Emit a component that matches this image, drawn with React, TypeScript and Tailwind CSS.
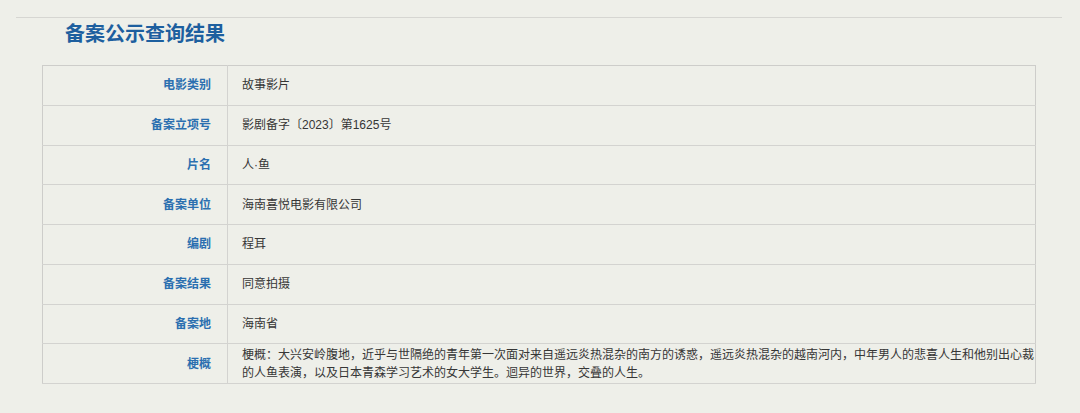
import React from 'react';

const rows: { label: string; value: string }[] = [
  { label: '电影类别', value: '故事影片' },
  { label: '备案立项号', value: '影剧备字〔2023〕第1625号' },
  { label: '片名', value: '人·鱼' },
  { label: '备案单位', value: '海南喜悦电影有限公司' },
  { label: '编剧', value: '程耳' },
  { label: '备案结果', value: '同意拍摄' },
  { label: '备案地', value: '海南省' },
  {
    label: '梗概',
    value:
      '梗概：大兴安岭腹地，近乎与世隔绝的青年第一次面对来自遥远炎热混杂的南方的诱惑，遥远炎热混杂的越南河内，中年男人的悲喜人生和他别出心裁的人鱼表演，以及日本青森学习艺术的女大学生。迴异的世界，交叠的人生。',
  },
];

export default function App() {
  return (
    <div
      className="h-[413px] w-[1080px] overflow-hidden bg-[#eeefe9] pt-[17px]"
      style={{ fontFamily: '"Liberation Sans", "Noto Sans CJK SC", sans-serif' }}
    >
      <div className="ml-[16px] w-[1046px] border-t border-[#d6d6d2]" />
      <h1 className="ml-[65px] mt-[3px] h-[44px] text-[20px] font-bold leading-[26px] text-[#1d5f9f]">
        备案公示查询结果
      </h1>
      <table className="ml-[42px] w-[994px] border-collapse border border-[#cdcdca] text-[12px]">
        <tbody>
          {rows.map((row) => (
            <tr key={row.label} className="h-[39.75px] border-b border-[#d3d3d0]">
              <td className="w-[185px] border-r border-[#d3d3d0] pr-[16px] text-right align-middle font-bold text-[#2b6fb0]">
                {row.label}
              </td>
              <td className="pl-[14px] pr-0 align-middle leading-[18px] text-[#363636]">
                {row.value}
              </td>
            </tr>
          ))}
        </tbody>
      </table>
    </div>
  );
}
